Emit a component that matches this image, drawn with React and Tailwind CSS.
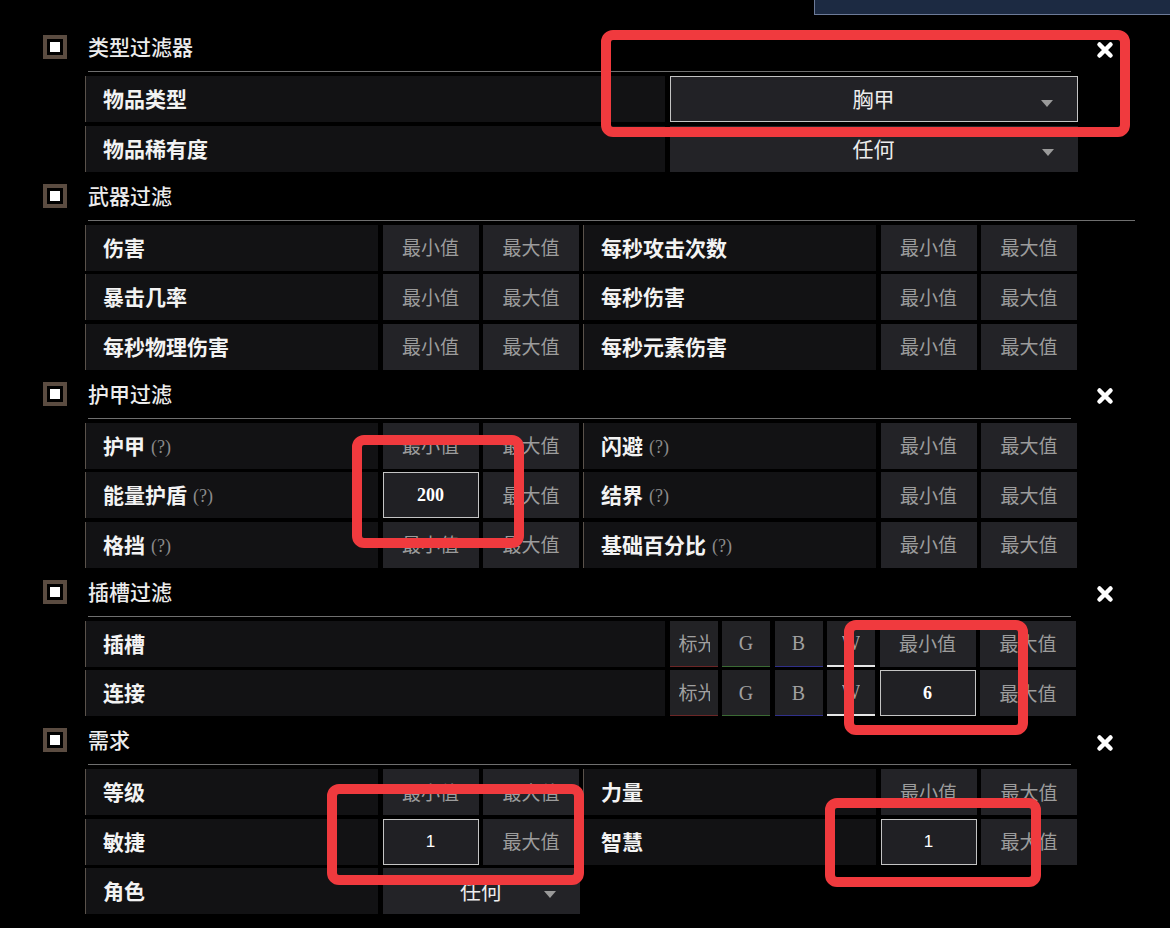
import React from "react";

const cjk = "font-['Microsoft_YaHei','Noto_Sans_CJK_SC',sans-serif]";

const Check = () => (
  <div className="w-[24px] h-[24px] border-[4px] border-[#5b4c41] bg-black flex items-center justify-center shrink-0">
    <div className="w-[10px] h-[10px] bg-white" />
  </div>
);

const CloseX = () => (
  <svg width="20" height="20" viewBox="0 0 20 20" className="ml-auto mr-[20px] mt-[5px]">
    <path d="M4.5 4.5L15.5 15.5M15.5 4.5L4.5 15.5" stroke="#ffffff" strokeWidth="4.5" strokeLinecap="round" />
  </svg>
);

const Heading = ({ title, close, wide }) => (
  <div>
    <div className="h-[48px] flex items-center">
      <Check />
      <span className="ml-[21px] text-[21px] font-medium text-[#ececec]">{title}</span>
      {close && <CloseX />}
    </div>
    <div className={wide ? "ml-[45px] h-px w-[1047px] bg-[#6f6f6f]" : "ml-[45px] h-px w-[983px] bg-[#6f6f6f]"} />
  </div>
);

const Label = ({ text, hint, w = "w-[293px]" }) => (
  <div className={`${w} h-[46px] shrink-0 border-l border-[#5a524b] bg-[#121214] pl-[17px] flex items-center`}>
    <span className="text-[21px] font-bold text-[#f3f3f3]">{text}</span>
    {hint && (
      <span className="ml-[6px] mt-[3px] font-['Liberation_Serif',serif] text-[18px] text-[#8b8b8b]">(?)</span>
    )}
  </div>
);

// placeholder box or filled input
const Box = ({ ph, value, serif }) =>
  value ? (
    <div
      className={`w-[96px] h-[46px] shrink-0 border border-[#c4c4c4] bg-[#202024] flex items-center justify-center text-white ${
        serif
          ? "font-['Liberation_Serif',serif] font-bold text-[18px]"
          : "font-['Liberation_Sans',sans-serif] text-[17px]"
      }`}
    >
      {value}
    </div>
  ) : (
    <div className="w-[96px] h-[46px] shrink-0 bg-[#232327] flex items-center justify-center text-[19px] text-[#9c9c9c]">
      {ph}
    </div>
  );

const Select = ({ text, w, focus }) => (
  <div
    className={`${w} h-[46px] shrink-0 relative flex items-center justify-center text-[21px] text-[#ededed] ${
      focus ? "border border-[#c4c4c4] bg-[#222226]" : "bg-[#232327]"
    }`}
  >
    {text}
    <span className="absolute right-[24px] top-[23px] w-0 h-0 border-l-[6px] border-r-[6px] border-t-[7px] border-l-transparent border-r-transparent border-t-[#9a9a9a]" />
  </div>
);

const Half = ({ label, hint, min, minSerif }) => (
  <div className="flex gap-[4.5px]">
    <Label text={label} hint={hint} />
    <Box ph="最小值" value={min} serif={minSerif} />
    <Box ph="最大值" />
  </div>
);

const Pair = ({ a, b }) => (
  <div className="flex gap-[4px]">
    <Half {...a} />
    <Half {...b} />
  </div>
);

const Sock = ({ text, line, serif }) => (
  <div
    className={`w-[48px] h-[46px] shrink-0 bg-[#222225] flex items-center text-[#a0a0a0] ${line} ${
      serif ? "justify-center font-['Liberation_Serif',serif] text-[20px]" : "pl-[9px] pr-[8px] text-[19px]"
    }`}
  >
    <div className="overflow-hidden whitespace-nowrap">{text}</div>
  </div>
);

const SocketRow = ({ label, min }) => (
  <div className="flex gap-[4.5px]">
    <Label text={label} w="w-[580px]" />
    <Sock text="标光" line="border-b border-[#6b2626]" />
    <Sock text="G" serif line="border-b border-[#3b6a34]" />
    <Sock text="B" serif line="border-b border-[#30308a]" />
    <Sock text="W" serif line="border-b-2 border-[#e6e6e6]" />
    <Box ph="最小值" value={min} serif />
    <Box ph="最大值" />
  </div>
);

const Rows = ({ children }) => (
  <div className="ml-[42px] mt-[4px] flex flex-col gap-[3.5px]">{children}</div>
);

const Mark = ({ pos }) => (
  <div className={`absolute ${pos} border-[10px] border-[#f03a3e] rounded-[12px] pointer-events-none`} />
);

export default function App() {
  return (
    <div className={`relative w-[1170px] h-[928px] bg-black overflow-hidden ${cjk}`}>
      <div className="flex justify-end">
        <div className="w-[356px] h-[15px] bg-[#1c2a42] border-l border-b border-[#6c7a98]" />
      </div>

      <div className="mt-[8px] ml-[43px] w-[1092px]">
        <Heading title="类型过滤器" close />
        <Rows>
          <div className="flex gap-[4.5px]">
            <Label text="物品类型" w="w-[580px]" />
            <Select text="胸甲" w="w-[408px]" focus />
          </div>
          <div className="flex gap-[4.5px]">
            <Label text="物品稀有度" w="w-[580px]" />
            <Select text="任何" w="w-[408px]" />
          </div>
        </Rows>

        <Heading title="武器过滤" wide />
        <Rows>
          <Pair a={{ label: "伤害" }} b={{ label: "每秒攻击次数" }} />
          <Pair a={{ label: "暴击几率" }} b={{ label: "每秒伤害" }} />
          <Pair a={{ label: "每秒物理伤害" }} b={{ label: "每秒元素伤害" }} />
        </Rows>

        <Heading title="护甲过滤" close />
        <Rows>
          <Pair a={{ label: "护甲", hint: true }} b={{ label: "闪避", hint: true }} />
          <Pair a={{ label: "能量护盾", hint: true, min: "200", minSerif: true }} b={{ label: "结界", hint: true }} />
          <Pair a={{ label: "格挡", hint: true }} b={{ label: "基础百分比", hint: true }} />
        </Rows>

        <Heading title="插槽过滤" close />
        <Rows>
          <SocketRow label="插槽" />
          <SocketRow label="连接" min="6" />
        </Rows>

        <Heading title="需求" close />
        <Rows>
          <Pair a={{ label: "等级" }} b={{ label: "力量" }} />
          <Pair a={{ label: "敏捷", min: "1" }} b={{ label: "智慧", min: "1" }} />
          <div className="flex gap-[4.5px]">
            <Label text="角色" />
            <Select text="任何" w="w-[197px]" />
          </div>
        </Rows>
      </div>

      <Mark pos="left-[601px] top-[30px] w-[529px] h-[107px]" />
      <Mark pos="left-[352px] top-[435px] w-[172px] h-[113px]" />
      <Mark pos="left-[844px] top-[620px] w-[184px] h-[115px]" />
      <Mark pos="left-[327px] top-[784px] w-[257px] h-[101px]" />
      <Mark pos="left-[825px] top-[798px] w-[216px] h-[89px]" />
    </div>
  );
}
